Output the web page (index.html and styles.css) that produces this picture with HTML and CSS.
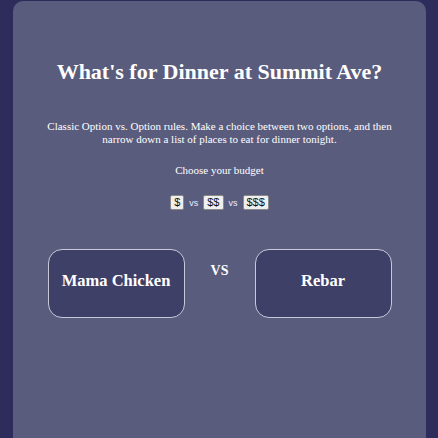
FILE: index.html
```html
<!DOCTYPE html>
<html>
<head>
<meta charset="utf-8">
<link rel="stylesheet" href="styles.css">
</head>
<body>
<main class="card">
  <h1 class="title">What's for Dinner at Summit Ave?</h1>
  <p class="intro">Classic Option vs. Option rules. Make a choice between two options, and then narrow down a list of places to eat for dinner tonight.</p>
  <p class="prompt">Choose your budget</p>
  <div class="budget">
    <button class="budget-btn">$</button>
    <span class="small-vs">vs</span>
    <button class="budget-btn">$$</button>
    <span class="small-vs">vs</span>
    <button class="budget-btn">$$$</button>
  </div>
  <div class="matchup">
    <div class="option">Mama Chicken</div>
    <div class="big-vs">VS</div>
    <div class="option">Rebar</div>
  </div>
</main>
</body>
</html>
```
FILE: styles.css
```css
html, body {
  margin: 0;
  padding: 0;
  height: 100%;
  background: #2d2c5a;
  overflow: hidden;
}
body {
  font-family: "Liberation Serif", "Times New Roman", serif;
  color: #ffffff;
}
.card {
  margin: 1px 12px 0 13px;
  height: 600px;
  background: #5a5c7e;
  border-radius: 10px;
  display: flex;
  flex-direction: column;
  align-items: center;
  text-align: center;
  padding: 0 20px;
  box-sizing: border-box;
}
.title {
  margin: 58px 0 0;
  font-size: 22px;
  font-weight: bold;
}
.intro {
  margin: 35px 0 0;
  font-size: 11px;
  line-height: 13px;
}
.prompt {
  margin: 18px 0 0;
  font-size: 11px;
}
.budget {
  margin-top: 19px;
  display: flex;
  align-items: center;
  gap: 4px;
}
.budget-btn {
  font-family: "Liberation Sans", Arial, sans-serif;
  font-size: 11px;
  line-height: 11px;
  background: #efefef;
  color: #111;
  border: 1px solid #8a8a8a;
  border-radius: 2px;
  padding: 1px 3px;
  height: 15px;
  min-width: 14px;
}
.small-vs {
  font-family: "Liberation Sans", Arial, sans-serif;
  font-size: 9px;
  color: #e8ecff;
  padding: 0 1px;
}
.matchup {
  margin-top: 39px;
  display: flex;
  align-items: flex-start;
  gap: 26px;
}
.option {
  width: 137px;
  height: 69px;
  box-sizing: border-box;
  background: #3f4068;
  border: 1px solid #c8c8d8;
  border-radius: 14px;
  display: flex;
  align-items: center;
  justify-content: center;
  padding-bottom: 6px;
  font-size: 16.5px;
  font-weight: bold;
}
.big-vs {
  margin-top: 14px;
  font-size: 14px;
  font-weight: bold;
  width: 18px;
}
```
